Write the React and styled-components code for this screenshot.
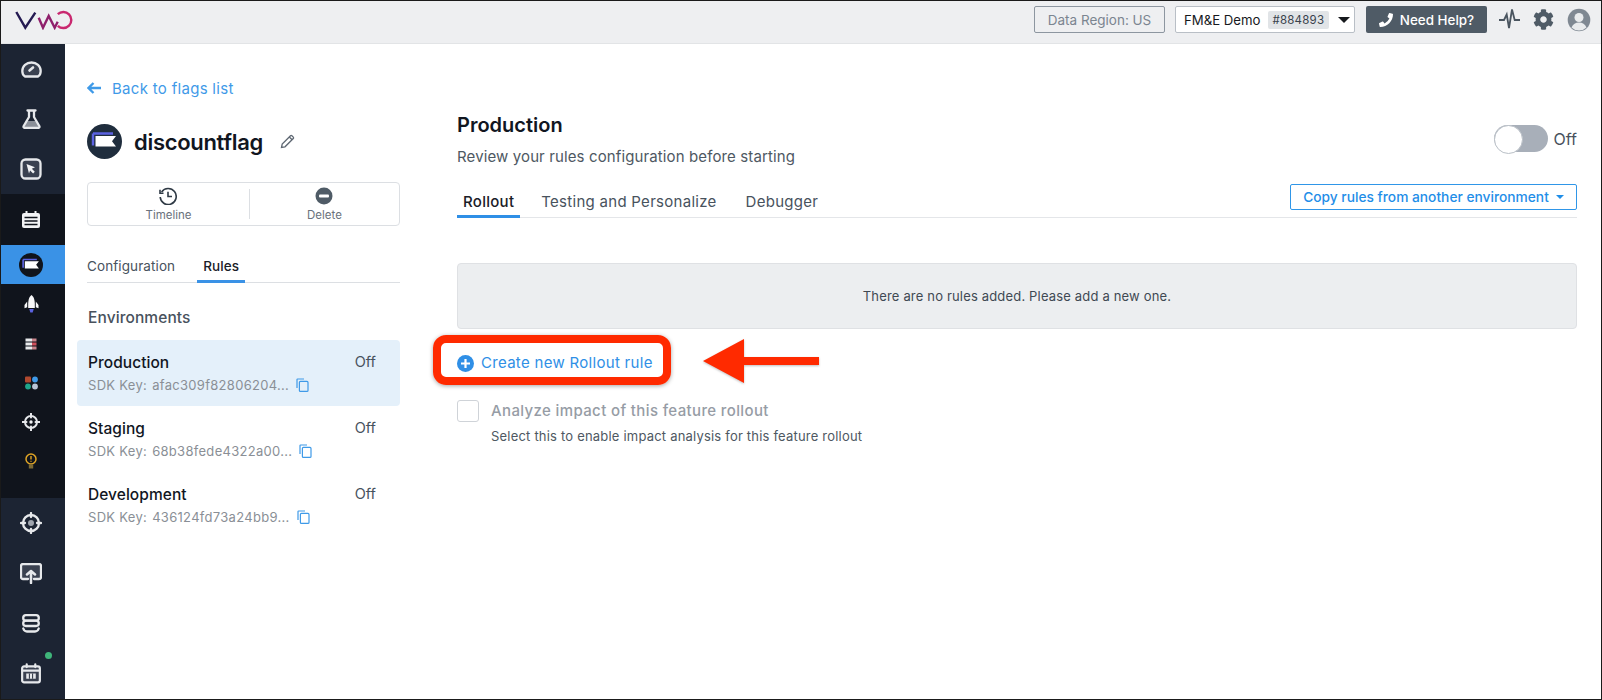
import React from 'react';
import styled, { createGlobalStyle } from 'styled-components';
import { FaCog, FaPhoneAlt } from 'react-icons/fa';

const GlobalStyle = createGlobalStyle`
  html, body { margin: 0; padding: 0; background: #fff; }
  body { font-family: Inter, "Noto Sans", sans-serif; -webkit-font-smoothing: antialiased; }
  * { box-sizing: border-box; }
`;

const FlagGlyph = ({ size = 35, bg = '#1f2d3d' }) => (
  <svg width={size} height={size} viewBox="0 0 35 35">
    <circle cx="17.5" cy="17.5" r="17.5" fill={bg} />
    <path d="M6 9.5h20M6 9.5v12" stroke="#5b62e0" strokeWidth="2.4" fill="none" />
    <path d="M8.5 12H29l-4 5.2 4 5.3H8.5z" fill="#fff" />
  </svg>
);

const CopyIcon = () => (
  <svg width="13" height="14" viewBox="0 0 13 14" fill="none" stroke="#3f9ae8" strokeWidth="1.2">
    <path d="M1 10V1.6C1 1.2 1.2 1 1.6 1H8" />
    <rect x="3.4" y="3.4" width="8.6" height="10" rx="1" />
  </svg>
);

const white = { fill: 'none', stroke: '#e6e8eb', strokeWidth: 2.3, strokeLinecap: 'round', strokeLinejoin: 'round' };
const inner = '#3a4150';

const sideIcons = {
  gauge: (
    <svg width="21" height="17" viewBox="0 0 21 17">
      <path d="M4 15.5C2 14.300 1.300 12.300 1.300 10 1.300 4.800 5.400 1.500 10.500 1.500S19.700 4.800 19.700 10c0 2.300-.7 4.300-2.700 5.500z" {...white} fill={inner} />
      <path d="M8.500 9.500l3.500-3" {...white} strokeWidth="2.600" />
    </svg>
  ),
  flask: (
    <svg width="19" height="20" viewBox="0 0 19 20">
      <path d="M4.200 12h10.600l2.200 6H2z" fill="#8a8f98" />
      <path d="M7 2v6L1.700 17c-.5 1 .1 2 1.300 2h13c1.200 0 1.800-1 1.300-2L12 8V2M5.500 1.500h8" {...white} />
    </svg>
  ),
  pointer: (
    <svg width="22" height="22" viewBox="0 0 22 22">
      <rect x="1.500" y="1.500" width="19" height="19" rx="4" {...white} fill={inner} />
      <path d="M6.500 6l8.500 3.200-3.200 1.500 3 3-1.700 1.700-3-3L9 15.500z" fill="#f2f3f5" />
    </svg>
  ),
  board: (
    <svg width="20" height="19" viewBox="0 0 20 19">
      <rect x="1" y="3" width="18" height="15" rx="2" fill="#f2f3f5" />
      <path d="M5.500 1v3M14.500 1v3" stroke="#f2f3f5" strokeWidth="2" />
      <path d="M3.500 7.500h13M3.500 11h13M3.500 14.500h13" stroke="#10141c" strokeWidth="1.500" />
    </svg>
  ),
  flag: <FlagGlyph size={24} bg="#10141c" />,
  rocket: (
    <svg width="15" height="18" viewBox="0 0 15 18">
      <path d="M7.500 0C10.500 2.500 11 6 10.800 13H4.200C4 6 4.500 2.500 7.500 0z" fill="#f7f7f8" />
      <path d="M3.200 6.500L.5 10v3.300l2.700-1zM11.800 6.500l2.700 3.500v3.300l-2.700-1z" fill="#f7f7f8" />
      <path d="M5.300 14h4.400l-1 3.500H6.300z" fill="#5b62e0" />
    </svg>
  ),
  stack: (
    <svg width="12" height="12" viewBox="0 0 12 12">
      <rect x="0.500" y="0.500" width="6.500" height="3" fill="#e8eaec" />
      <rect x="7" y="0.500" width="4.500" height="3" fill="#c9858c" />
      <rect x="0.500" y="4.500" width="6.500" height="3" fill="#e8eaec" />
      <rect x="7" y="4.500" width="4.500" height="3" fill="#d0505c" />
      <rect x="0.500" y="8.500" width="6.500" height="3" fill="#e8eaec" />
      <rect x="7" y="8.500" width="4.500" height="3" fill="#c9858c" />
    </svg>
  ),
  apps: (
    <svg width="13" height="14" viewBox="0 0 13 14">
      <rect x="0" y="0.500" width="6" height="6" rx="1" fill="#b0492f" />
      <circle cx="10" cy="3.500" r="2.900" fill="#3f9ae8" />
      <circle cx="3" cy="10.500" r="2.900" fill="#1fa58a" />
      <circle cx="10" cy="10.500" r="2.900" fill="#b9c4d6" />
    </svg>
  ),
  target: (
    <svg width="18" height="18" viewBox="0 0 18 18" {...white} strokeWidth="2">
      <circle cx="9" cy="9" r="6" />
      <path d="M9 .5v4M9 13.500v4M.5 9h4M13.500 9h4" />
      <circle cx="9" cy="9" r="1.700" fill="#f2f3f5" stroke="none" />
    </svg>
  ),
  bulb: (
    <svg width="12" height="16" viewBox="0 0 12 16">
      <circle cx="6" cy="6" r="5" fill="none" stroke="#e0a526" strokeWidth="1.500" />
      <path d="M6 3v3.500M6 7.800v1" stroke="#e0a526" strokeWidth="1.400" />
      <rect x="3.800" y="11.500" width="4.400" height="4" fill="#7d6a35" />
    </svg>
  ),
  bigTarget: (
    <svg width="22" height="22" viewBox="0 0 22 22" {...white}>
      <circle cx="11" cy="11" r="8" />
      <path d="M11 1v4M11 17v4M1 11h4M17 11h4" />
      <circle cx="11" cy="11" r="3" fill="#a0a5ae" stroke="none" />
    </svg>
  ),
  upload: (
    <svg width="22" height="21" viewBox="0 0 22 21">
      <path d="M8 16H3a2 2 0 0 1-2-2V3a2 2 0 0 1 2-2h16a2 2 0 0 1 2 2v11a2 2 0 0 1-2 2h-5" {...white} fill={inner} />
      <path d="M11 20V8M7 11.500L11 8l4 3.500" {...white} strokeWidth="2.500" />
    </svg>
  ),
  db: (
    <svg width="18" height="19" viewBox="0 0 18 19" {...white}>
      <rect x="1.200" y="1.200" width="15.600" height="5.400" rx="2.700" />
      <rect x="1.200" y="6.600" width="15.600" height="5.400" rx="2.700" />
      <path d="M1.300 14.500c.6 1.900 1.800 3 3.700 3h8c1.900 0 3.100-1.100 3.700-3" />
    </svg>
  ),
  calendar: (
    <svg width="20" height="21" viewBox="0 0 21 21">
      <rect x="1.200" y="3" width="18.600" height="16.800" rx="2" {...white} fill={inner} />
      <path d="M1.500 7.500h18" {...white} />
      <path d="M6 .8v3M15 .8v3" {...white} />
      <path d="M5.500 10.500h10v5.500h-10z" fill="#e6e8eb" />
      <path d="M8.800 10.500v5.500M12.200 10.500v5.500" stroke="#1c2433" strokeWidth="1" />
    </svg>
  ),
};

const environments = [
  { name: 'Production', key: 'afac309f82806204...', active: true },
  { name: 'Staging', key: '68b38fede4322a00...' },
  { name: 'Development', key: '436124fd73a24bb9...' },
];

const App = () => (
  <Frame>
    <GlobalStyle />
    <Header>
      <svg width="58" height="20" viewBox="0 0 58 20" fill="none" strokeWidth="2.400">
        <path d="M1.300 2l9 15.700L20.300 2.700" stroke="#241a52" />
        <path d="M23.700 7.700L28 17.700 33.700 6l6 11.700 3-6" stroke="#8f1f6b" />
        <path d="M42.800 4.200A8 8 0 1 1 42.800 15.800" stroke="#c9286f" />
      </svg>
      <HeaderRight>
        <RegionBox>Data Region: US</RegionBox>
        <AccountSelect>
          FM&amp;E Demo
          <AccountBadge>#884893</AccountBadge>
          <Caret $size={6} $color="#16191d" />
        </AccountSelect>
        <HelpButton>
          <FaPhoneAlt size={14} style={{ transform: 'scaleX(-1)' }} />
          Need Help?
        </HelpButton>
        <HeaderIcons>
          <svg width="21" height="22" viewBox="0 0 21 22" fill="none" stroke="#4a5560" strokeWidth="1.800">
            <path d="M0 11h5l2.700-5.500L10 19l3-18.500 2.700 10.500H21" />
          </svg>
          <FaCog size={21} color="#4f5b66" />
          <svg width="24" height="24" viewBox="0 0 24 24">
            <circle cx="12" cy="12" r="11.300" fill="#7f8892" />
            <circle cx="12" cy="9.500" r="4.500" fill="#e9ebed" />
            <path d="M4.500 19.500c1.500-3.500 4-5 7.500-5s6 1.500 7.500 5A10.500 10.500 0 0 1 12 22.500a10.500 10.500 0 0 1-7.500-3z" fill="#e9ebed" />
          </svg>
        </HeaderIcons>
      </HeaderRight>
    </Header>
    <Body>
      <Sidebar>
        <SideGroup>
          <SideItem $h={50}>{sideIcons.gauge}</SideItem>
          <SideItem $h={50}>{sideIcons.flask}</SideItem>
          <SideItem $h={50}>{sideIcons.pointer}</SideItem>
        </SideGroup>
        <SideGroup $dark>
          <SideItem $h={51}>{sideIcons.board}</SideItem>
          <SideItem $h={39} $active>{sideIcons.flag}</SideItem>
          <SideItem $h={40}>{sideIcons.rocket}</SideItem>
          <SideItem $h={39}>{sideIcons.stack}</SideItem>
          <SideItem $h={39}>{sideIcons.apps}</SideItem>
          <SideItem $h={39}>{sideIcons.target}</SideItem>
          <SideItem $h={39}>{sideIcons.bulb}</SideItem>
          <SideSpacer />
        </SideGroup>
        <SideGroup>
          <SideItem $h={50}>{sideIcons.bigTarget}</SideItem>
          <SideItem $h={50}>{sideIcons.upload}</SideItem>
          <SideItem $h={50}>{sideIcons.db}</SideItem>
          <SideItem $h={50}>
            {sideIcons.calendar}
            <GreenDot />
          </SideItem>
        </SideGroup>
      </Sidebar>

      <LeftPanel>
        <BackLink>
          <svg width="14" height="12" viewBox="0 0 14 12" fill="none" stroke="#3f9ae8" strokeWidth="2.300">
            <path d="M14 6H2M6.500 1L1.500 6l5 5" />
          </svg>
          Back to flags list
        </BackLink>
        <FlagRow>
          <FlagGlyph />
          <FlagName>discountflag</FlagName>
          <svg width="15" height="15" viewBox="0 0 15 15" fill="none" stroke="#5f6873" strokeWidth="1.300">
            <path d="M1.500 13.500l.7-3.500L10.500 1.700a1 1 0 0 1 1.400 0l1.400 1.400a1 1 0 0 1 0 1.400L5 12.800z" />
            <path d="M9.300 3l2.800 2.800" />
          </svg>
        </FlagRow>
        <ActionBox>
          <ActionItem $w={162}>
            <svg width="18" height="18" viewBox="0 0 18 18" fill="none" stroke="#2f3a45" strokeWidth="1.600">
              <path d="M2.600 5a8 8 0 1 1-1.400 5" />
              <path d="M1 2.800v3.500h3.500" />
              <path d="M9 4.800V9.500h4" />
            </svg>
            Timeline
          </ActionItem>
          <ActionDivider />
          <ActionItem $w={150}>
            <svg width="18" height="18" viewBox="0 0 18 18">
              <circle cx="9" cy="9" r="8.500" fill="#4f5b66" />
              <rect x="4" y="7.500" width="10" height="3" rx="1" fill="#fff" />
            </svg>
            Delete
          </ActionItem>
        </ActionBox>
        <LeftTabs>
          <LeftTab>Configuration</LeftTab>
          <LeftTab $active>Rules</LeftTab>
        </LeftTabs>
        <SectionTitle>Environments</SectionTitle>
        <EnvList>
          {environments.map((env) => (
            <EnvRow key={env.name} $active={env.active}>
              <EnvName>{env.name}</EnvName>
              <EnvStatus>Off</EnvStatus>
              <EnvKey>
                <span>SDK Key:</span>
                <span>{env.key}</span>
                <CopyIcon />
              </EnvKey>
            </EnvRow>
          ))}
        </EnvList>
      </LeftPanel>

      <MainPanel>
        <TitleRow>
          <div>
            <MainTitle>Production</MainTitle>
            <MainSubtitle>Review your rules configuration before starting</MainSubtitle>
          </div>
          <ToggleWrap>
            <Toggle />
            Off
          </ToggleWrap>
        </TitleRow>
        <MainTabs>
          <TabList>
            <MainTab $active>Rollout</MainTab>
            <MainTab>Testing and Personalize</MainTab>
            <MainTab>Debugger</MainTab>
          </TabList>
          <CopyRulesButton>
            Copy rules from another environment
            <Caret $size={4} $color="#1f8ee8" />
          </CopyRulesButton>
        </MainTabs>
        <EmptyBox>There are no rules added. Please add a new one.</EmptyBox>
        <CreateRow>
          <CreateLink>
            <svg width="17" height="17" viewBox="0 0 17 17">
              <circle cx="8.500" cy="8.500" r="8.500" fill="#2f8fe6" />
              <path d="M8.500 4v9M4 8.500h9" stroke="#fff" strokeWidth="2.200" />
            </svg>
            Create new Rollout rule
          </CreateLink>
          <Highlight />
          <ArrowMark width="117" height="44" viewBox="0 0 117 44">
            <path d="M0 22L41 0v18h75v8H41v18z" fill="#ff2a00" />
          </ArrowMark>
        </CreateRow>
        <CheckRow>
          <CheckBox />
          <div>
            <CheckLabel>Analyze impact of this feature rollout</CheckLabel>
            <CheckHint>Select this to enable impact analysis for this feature rollout</CheckHint>
          </div>
        </CheckRow>
      </MainPanel>
    </Body>
  </Frame>
);

export default App;

const Frame = styled.div`
  width: 1602px;
  height: 700px;
  border: 1px solid #1a1a1a;
  display: flex;
  flex-direction: column;
  overflow: hidden;
  background: #fff;
`;

const Header = styled.header`
  height: 43px;
  flex: none;
  display: flex;
  align-items: center;
  justify-content: space-between;
  padding: 0 10px 5px 14px;
  background: #eeeff1;
  border-bottom: 1px solid #e2e4e6;
`;

const HeaderRight = styled.div`
  display: flex;
  align-items: center;
`;

const RegionBox = styled.div`
  width: 131px;
  height: 27px;
  display: flex;
  align-items: center;
  justify-content: center;
  border: 1px solid #8d96a0;
  border-radius: 2px;
  font-size: 13.5px;
  color: #7b8590;
`;

const AccountSelect = styled.div`
  width: 180px;
  height: 27px;
  margin-left: 10px;
  padding-left: 8px;
  display: flex;
  align-items: center;
  background: #fff;
  border: 1px solid #b9bfc6;
  border-radius: 2px;
  font-size: 13.2px;
  color: #16191d;
`;

const AccountBadge = styled.span`
  margin: 0 7px;
  padding: 2px 5px;
  background: #e1e4e7;
  border-radius: 2px;
  font-size: 11.5px;
  letter-spacing: 0.2px;
  color: #39424c;
`;

const Caret = styled.span`
  width: 0;
  height: 0;
  margin-left: 2px;
  border-left: ${(p) => p.$size}px solid transparent;
  border-right: ${(p) => p.$size}px solid transparent;
  border-top: ${(p) => p.$size}px solid ${(p) => p.$color};
`;

const HelpButton = styled.div`
  width: 121px;
  height: 27px;
  margin-left: 11px;
  display: flex;
  align-items: center;
  justify-content: center;
  gap: 7px;
  background: #4f5b66;
  border-radius: 2px;
  font-size: 13.4px;
  font-weight: 500;
  color: #fff;
`;

const HeaderIcons = styled.div`
  display: flex;
  align-items: center;
  gap: 13px;
  margin-left: 12px;
`;

const Body = styled.div`
  flex: 1;
  display: flex;
  min-height: 0;
`;

const Sidebar = styled.nav`
  width: 64px;
  flex: none;
  display: flex;
  flex-direction: column;
  background: #1c2433;
`;

const SideGroup = styled.div`
  display: flex;
  flex-direction: column;
  background: ${(p) => (p.$dark ? '#10141c' : 'transparent')};
`;

const SideItem = styled.div`
  position: relative;
  height: ${(p) => p.$h}px;
  padding-right: 4px;
  display: flex;
  align-items: center;
  justify-content: center;
  background: ${(p) => (p.$active ? '#3a92e6' : 'transparent')};
`;

const SideSpacer = styled.div`
  height: 18px;
`;

const GreenDot = styled.span`
  position: absolute;
  top: 4px;
  right: 13px;
  width: 7px;
  height: 7px;
  border-radius: 50%;
  background: #3fb57a;
`;

const LeftPanel = styled.aside`
  width: 335px;
  flex: none;
  padding: 33px 0 0 22px;
`;

const BackLink = styled.a`
  height: 22px;
  display: flex;
  align-items: center;
  gap: 11px;
  font-size: 15px;
  letter-spacing: 0.3px;
  color: #3f9ae8;
`;

const FlagRow = styled.div`
  margin-top: 25px;
  display: flex;
  align-items: center;
`;

const FlagName = styled.h1`
  margin: 0 17px 0 12px;
  font-size: 22px;
  font-weight: 600;
  letter-spacing: -0.3px;
  color: #11161f;
`;

const ActionBox = styled.div`
  margin-top: 23px;
  height: 44px;
  display: flex;
  align-items: center;
  border: 1px solid #dcdfe3;
  border-radius: 4px;
`;

const ActionItem = styled.div`
  width: ${(p) => p.$w}px;
  display: flex;
  flex-direction: column;
  align-items: center;
  gap: 3px;
  font-size: 11.5px;
  line-height: 14px;
  color: #6a727c;
`;

const ActionDivider = styled.div`
  width: 1px;
  height: 30px;
  background: #dcdfe3;
`;

const LeftTabs = styled.div`
  margin-top: 30px;
  height: 27px;
  display: flex;
  gap: 22px;
  border-bottom: 1px solid #dcdfe3;
`;

const LeftTab = styled.div`
  margin-bottom: -1px;
  padding: 0 ${(p) => (p.$active ? '6px' : '0')};
  font-size: 13.5px;
  line-height: 20px;
  letter-spacing: 0.1px;
  font-weight: ${(p) => (p.$active ? 500 : 400)};
  color: ${(p) => (p.$active ? '#1a2028' : '#48525d')};
  border-bottom: 3px solid ${(p) => (p.$active ? '#3a92e6' : 'transparent')};
`;

const SectionTitle = styled.h2`
  margin: 24px 0 0 1px;
  font-size: 15.5px;
  line-height: 22px;
  letter-spacing: 0.1px;
  font-weight: 500;
  color: #48525d;
`;

const EnvList = styled.div`
  margin: 11px 0 0 -10px;
`;

const EnvRow = styled.div`
  height: 66px;
  padding: 13px 24px 0 11px;
  display: grid;
  grid-template-columns: 1fr auto;
  grid-auto-rows: min-content;
  row-gap: 3px;
  border-radius: 4px;
  background: ${(p) => (p.$active ? '#e4f0fa' : 'transparent')};
`;

const EnvName = styled.div`
  font-size: 15.5px;
  line-height: 20px;
  letter-spacing: 0.05px;
  font-weight: 500;
  color: #11161f;
`;

const EnvStatus = styled.div`
  font-size: 14.5px;
  line-height: 18px;
  color: #48525d;
`;

const EnvKey = styled.div`
  grid-column: 1 / -1;
  display: flex;
  align-items: center;
  gap: 5px;
  font-size: 13px;
  line-height: 18px;
  letter-spacing: 0.3px;
  color: #8a8f96;

  svg {
    margin-left: 2px;
  }
`;

const MainPanel = styled.main`
  flex: 1;
  min-width: 0;
  padding: 69px 24px 0 57px;
`;

const TitleRow = styled.div`
  display: flex;
  align-items: center;
  justify-content: space-between;
`;

const MainTitle = styled.h2`
  margin: 0;
  font-size: 20px;
  line-height: 24px;
  font-weight: 600;
  color: #11161f;
`;

const MainSubtitle = styled.p`
  margin: 9px 0 0;
  font-size: 15px;
  line-height: 22px;
  letter-spacing: 0.12px;
  color: #4e5862;
`;

const ToggleWrap = styled.div`
  display: flex;
  align-items: center;
  gap: 6px;
  margin-bottom: 4px;
  font-size: 16px;
  color: #48525d;
`;

const Toggle = styled.span`
  position: relative;
  width: 54px;
  height: 27px;
  border-radius: 14px;
  background: #a8afb9;

  &::before {
    content: '';
    position: absolute;
    left: 0;
    top: 0;
    width: 27px;
    height: 27px;
    border-radius: 50%;
    background: #fff;
    border: 1px solid #b9bfc6;
  }
`;

const MainTabs = styled.div`
  margin-top: 16px;
  height: 34px;
  display: flex;
  align-items: flex-start;
  justify-content: space-between;
  border-bottom: 1px solid #e4e6e9;
`;

const TabList = styled.div`
  display: flex;
  gap: 17px;
`;

const MainTab = styled.div`
  height: 34px;
  margin-right: ${(p) => (p.$active ? '-2px' : '0')};
  padding: 8px 6px 0;
  font-size: 15px;
  line-height: 20px;
  letter-spacing: 0.28px;
  font-weight: ${(p) => (p.$active ? 500 : 400)};
  color: ${(p) => (p.$active ? '#1a2028' : '#48525d')};
  border-bottom: 3px solid ${(p) => (p.$active ? '#2f8fe6' : 'transparent')};
`;

const CopyRulesButton = styled.div`
  width: 287px;
  height: 26px;
  display: flex;
  align-items: center;
  justify-content: center;
  gap: 5px;
  border: 1px solid #2f96e8;
  border-radius: 2px;
  font-size: 13.75px;
  font-weight: 500;
  color: #1f8ee8;
`;

const EmptyBox = styled.div`
  margin-top: 45px;
  height: 66px;
  display: flex;
  align-items: center;
  justify-content: center;
  background: #eceef0;
  border: 1px solid #dfe1e4;
  border-radius: 4px;
  font-size: 13px;
  letter-spacing: 0.17px;
  color: #3f4953;
`;

const CreateRow = styled.div`
  position: relative;
  margin-top: 24px;
  height: 20px;
`;

const CreateLink = styled.a`
  display: flex;
  align-items: center;
  gap: 7px;
  font-size: 15px;
  line-height: 20px;
  letter-spacing: 0.3px;
  color: #2f8fe6;
`;

const Highlight = styled.div`
  position: absolute;
  left: -24px;
  top: -18px;
  width: 238px;
  height: 50px;
  border: 8px solid #ff2a00;
  border-radius: 13px;
  box-shadow: 0 1px 4px rgba(0, 0, 0, 0.35);
`;

const ArrowMark = styled.svg`
  position: absolute;
  left: 246px;
  top: -14px;
  filter: drop-shadow(0 1px 1px rgba(0, 0, 0, 0.25));
`;

const CheckRow = styled.div`
  margin-top: 27px;
  display: flex;
  gap: 12px;
`;

const CheckBox = styled.span`
  width: 22px;
  height: 22px;
  border: 1px solid #cfd3d8;
  border-radius: 3px;
  background: #fff;
`;

const CheckLabel = styled.div`
  font-size: 15px;
  line-height: 22px;
  letter-spacing: 0.37px;
  font-weight: 500;
  color: #969ca5;
`;

const CheckHint = styled.div`
  margin-top: 5px;
  font-size: 13px;
  line-height: 18px;
  letter-spacing: 0.2px;
  color: #4e5862;
`;
